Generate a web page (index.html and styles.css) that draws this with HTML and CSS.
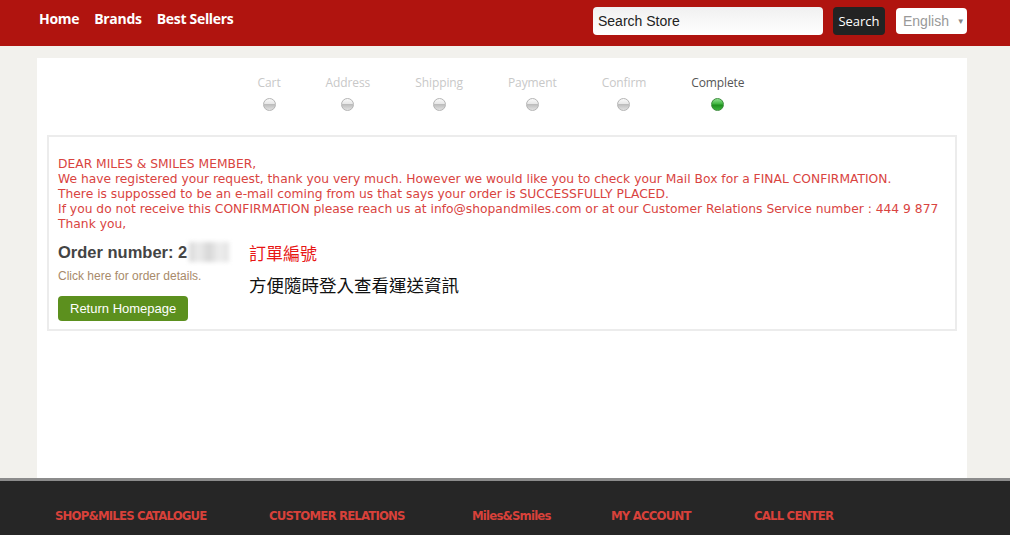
FILE: index.html
```html
<!DOCTYPE html>
<html lang="en">

<head>
  <meta charset="UTF-8">
  <title>Order Complete</title>
  <meta name="viewport" content="width=device-width,initial-scale=1.0">
  <link rel="stylesheet" href="styles.css">
</head>

<body>

  <header class="topbar">
    <div class="topbar-inner">
      <nav class="main-nav">
        <a href="#">Home</a>
        <a href="#">Brands</a>
        <a href="#">Best Sellers</a>
      </nav>
      <div class="tools">
        <input class="search-input" type="text" value="Search Store">
        <button class="search-button">Search</button>
        <div class="lang">English <span class="caret">&#9660;</span></div>
      </div>
    </div>
  </header>

  <main class="page">
    <!-- checkout steps -->
    <ol class="steps">
      <li class="step"><span>Cart</span><i class="dot"></i></li>
      <li class="step"><span>Address</span><i class="dot"></i></li>
      <li class="step"><span>Shipping</span><i class="dot"></i></li>
      <li class="step"><span>Payment</span><i class="dot"></i></li>
      <li class="step"><span>Confirm</span><i class="dot"></i></li>
      <li class="step active"><span>Complete</span><i class="dot"></i></li>
    </ol>

    <section class="result-box">
      <p class="notice">
        DEAR MILES &amp; SMILES MEMBER,<br>
        We have registered your request, thank you very much. However we would like you to check your Mail Box for a FINAL CONFIRMATION.<br>
        There is suppossed to be an e-mail coming from us that says your order is SUCCESSFULLY PLACED.<br>
        If you do not receive this CONFIRMATION please reach us at info@shopandmiles.com or at our Customer Relations Service number : 444 9 877<br>
        Thank you,
      </p>

      <div class="order-row">
        <div class="order-info">
          <h2 class="order-number">Order number: 2<span class="blur"></span></h2>
          <a class="details-link" href="#">Click here for order details.</a>
          <a class="return-button" href="#">Return Homepage</a>
        </div>
        <div class="notes">
          <p class="note-red">訂單編號</p>
          <p class="note-black">方便隨時登入查看運送資訊</p>
        </div>
      </div>
    </section>
  </main>

  <footer class="footer">
    <a href="#">SHOP&amp;MILES CATALOGUE</a>
    <a href="#">CUSTOMER RELATIONS</a>
    <a href="#">Miles&amp;Smiles</a>
    <a href="#">MY ACCOUNT</a>
    <a href="#">CALL CENTER</a>
  </footer>

</body>

</html>
```

FILE: styles.css
```css
html,
body {
  margin: 0;
  height: 100%;
}

body {
  background-color: #f2f1ed;
  font-family: "Liberation Sans", Arial, sans-serif;
  overflow: hidden;
}

a {
  text-decoration: none;
}

.topbar {
  background-color: #b0140f;
  height: 46px;
}

.topbar-inner {
  margin-left: 37px;
  width: 930px;
  height: 100%;
  display: flex;
  justify-content: space-between;
  align-items: flex-start;
}

.main-nav {
  display: flex;
  gap: 15px;
  padding: 9px 0 0 2px;
}

.main-nav a {
  color: #fff;
  font-family: "Open Sans", sans-serif;
  font-weight: 700;
  font-size: 14px;
  letter-spacing: -0.3px;
}

.tools {
  display: flex;
  align-items: center;
  padding-top: 6px;
}

.search-input {
  width: 230px;
  height: 28px;
  box-sizing: border-box;
  border: 0;
  border-radius: 4px;
  padding: 0 5px;
  font-family: "Liberation Sans", Arial, sans-serif;
  font-size: 14px;
  color: #222;
  background: linear-gradient(#f0f0f0, #fff);
}

.search-button {
  margin-left: 10px;
  width: 52px;
  height: 28px;
  border: 0;
  border-radius: 4px;
  background-color: #232323;
  color: #fff;
  font-family: "Open Sans", sans-serif;
  font-size: 13px;
  padding: 0;
  margin-top: 1px;
}

.lang {
  margin-left: 11px;
  width: 71px;
  height: 26px;
  box-sizing: border-box;
  border-radius: 4px;
  background-color: #fff;
  color: #999;
  font-family: "Liberation Sans", Arial, sans-serif;
  font-size: 14px;
  padding: 5px 0 0 7px;
}

.lang .caret {
  font-size: 8px;
  margin-left: 4px;
  vertical-align: 2px;
  color: #888;
}

.page {
  margin: 12px 0 0 37px;
  width: 930px;
  height: 420px;
  background-color: #fff;
  box-sizing: border-box;
  padding: 16px 10px 0;
}

.steps {
  list-style: none;
  margin: 0;
  padding: 0;
  display: flex;
  justify-content: center;
  gap: 45px;
  transform: translateX(-1px);
}

.step {
  display: flex;
  flex-direction: column;
  align-items: center;
  font-family: "Open Sans", sans-serif;
  font-size: 12px;
  color: #c8c8c8;
  letter-spacing: -0.1px;
}

.step.active {
  color: #555;
}

.dot {
  margin-top: 7px;
  width: 13px;
  height: 13px;
  box-sizing: border-box;
  border-radius: 50%;
  border: 1px solid #b5b5b5;
  background: linear-gradient(#fafafa 0, #e6e6e6 45%, #bdbdbd 50%, #e2e2e2 100%);
}

.step.active .dot {
  border-color: #3c8c3c;
  background: linear-gradient(#8fe08f 0, #3fb53f 45%, #1f8f1f 55%, #3cb33c 100%);
}

.result-box {
  margin-top: 24px;
  border: 2px solid #ececec;
  height: 196px;
  box-sizing: border-box;
  padding: 20px 9px 0;
}

.notice {
  margin: 0;
  color: #d9443f;
  font-family: "DejaVu Sans", sans-serif;
  font-size: 12.3px;
  line-height: 15px;
}

.order-row {
  display: flex;
  margin-top: 10px;
}

.order-info {
  width: 191px;
  display: flex;
  flex-direction: column;
  align-items: flex-start;
}

.order-number {
  margin: 0;
  font-size: 16.5px;
  color: #444;
  font-weight: 700;
  line-height: 20px;
  display: flex;
  align-items: center;
}

.blur {
  display: inline-block;
  width: 40px;
  height: 20px;
  margin-left: 2px;
  background: linear-gradient(90deg, #d8d8d8, #ececec 25%, #d6d6d6 50%, #eeeeee 75%, #e2e2e2);
  filter: blur(2px);
}

.details-link {
  margin-top: 7px;
  color: #a88a6a;
  font-size: 12px;
}

.return-button {
  margin-top: 13px;
  background-color: #5c901e;
  color: #fff;
  font-size: 13px;
  border-radius: 4px;
  padding: 5px 12px 4px;
  line-height: 16px;
}

.notes p {
  margin: 0;
  font-family: "Noto Sans CJK TC", sans-serif;
}

.note-red {
  color: #e81515;
  font-size: 17px;
  line-height: 22px;
}

.note-black {
  margin-top: 9px !important;
  color: #111;
  font-size: 17.5px;
  line-height: 24px;
}

.footer {
  border-top: 3px solid #8c8c8c;
  background-color: #262626;
  height: 60px;
  display: flex;
  padding: 27px 0 0 55px;
}

.footer a {
  color: #d8413a;
  font-family: "DejaVu Sans", sans-serif;
  font-stretch: condensed;
  font-weight: 700;
  font-size: 13px;
  letter-spacing: -0.8px;
}

.footer a:nth-child(1) { width: 214px; }
.footer a:nth-child(2) { width: 203px; }
.footer a:nth-child(3) { width: 139px; }
.footer a:nth-child(4) { width: 143px; }
```
